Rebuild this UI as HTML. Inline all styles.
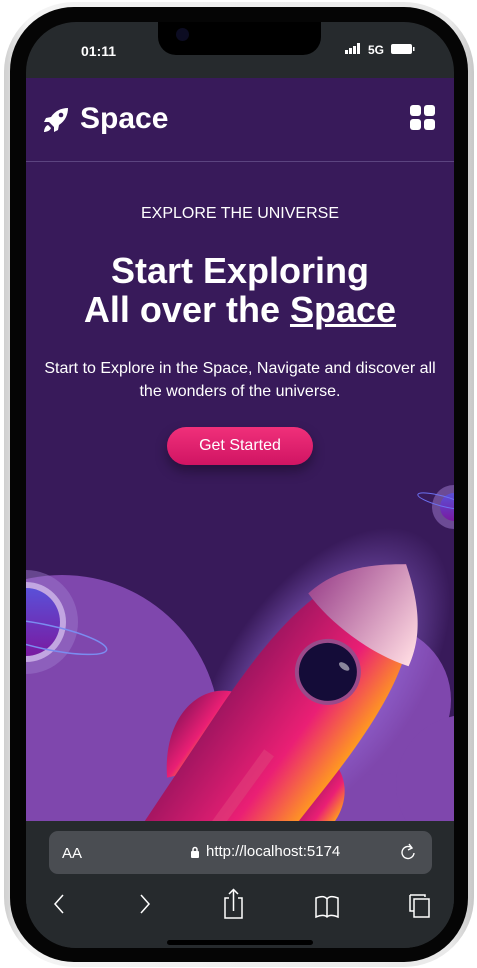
<!DOCTYPE html>
<html><head><meta charset="utf-8"><style>
*{margin:0;padding:0;box-sizing:border-box}
body{width:477px;height:968px;background:#fff;position:relative;overflow:hidden;font-family:"Liberation Sans",sans-serif}
.frame{position:absolute;left:4px;top:2px;width:470px;height:965px;border-radius:70px;background:linear-gradient(90deg,#cfcfcf,#f4f4f4 5%,#e9e9e9 95%,#c8c8c8);}
.bezel{position:absolute;left:10px;top:7px;width:458px;height:955px;border-radius:64px;background:#050505}
.screen{position:absolute;left:26px;top:22px;width:428px;height:926px;border-radius:50px;overflow:hidden;background:#262a2d}
.notch{position:absolute;left:158px;top:22px;width:163px;height:33px;background:#000;border-radius:0 0 18px 18px}
.time{position:absolute;left:81px;top:43px;color:#fff;font-weight:bold;font-size:14px}
.content{position:absolute;left:0;top:56px;width:428px;height:743px;background:#381a5a;overflow:hidden}
.hdr{height:84px;border-bottom:1px solid #5c4480;position:relative}
.hdr .t{position:absolute;left:54px;top:24px;color:#fff;font-weight:bold;font-size:30px}
.c{position:absolute;width:100%;text-align:center;color:#fff}
.btn{position:absolute;left:141px;top:349px;width:146px;height:38px;border-radius:19px;background:linear-gradient(#f0307a,#d01463);color:#fff;font-size:16px;text-align:center;line-height:38px;box-shadow:0 6px 12px rgba(0,0,0,.35)}
.bar{position:absolute;left:0;top:799px;width:428px;height:127px;background:#262a2d}
.url{position:absolute;left:23px;top:10px;width:383px;height:43px;border-radius:9px;background:#4a4d52;color:#fff}
</style></head><body>
<div class="frame"></div><div class="bezel"></div>
<div class="screen">
 <div class="content">
  <div class="hdr">
   <svg style="position:absolute;left:17px;top:29px" width="26" height="26" viewBox="0 0 26 26"><path d="M25 1C18 1 12 4 8 10L3 11 1 15 6 15 11 20 11 25 15 23 16 18C22 14 25 8 25 1Z" fill="#fff"/><circle cx="18" cy="8" r="2.3" fill="#381a5a"/><path d="M5 18C2 19 1 23 1 25 3 25 7 24 8 21Z" fill="#fff"/></svg>
   <div class="t">Space</div>
   <svg style="position:absolute;left:384px;top:27px" width="25" height="25"><rect x="0" y="0" width="11" height="11" rx="3" fill="#fff"/><rect x="14" y="0" width="11" height="11" rx="3" fill="#fff"/><rect x="0" y="14" width="11" height="11" rx="3" fill="#fff"/><rect x="14" y="14" width="11" height="11" rx="3" fill="#fff"/></svg>
  </div>
  <div class="c" style="top:127px;font-size:16px">EXPLORE THE UNIVERSE</div>
  <div class="c" style="top:173px;font-size:36px;font-weight:bold;line-height:39px">Start Exploring<br>All over the <u>Space</u></div>
  <div class="c" style="top:279px;font-size:16px;line-height:23px">Start to Explore in the Space, Navigate and discover all<br>the wonders of the universe.</div>
  <div class="btn">Get Started</div>
  <svg style="position:absolute;left:0;top:387px" width="428" height="356" viewBox="0 0 428 356">
   <defs>
    <linearGradient id="rb" x1="0" y1="0" x2="1" y2="0"><stop offset="0" stop-color="#a01560"/><stop offset=".6" stop-color="#ea1f74"/><stop offset="1" stop-color="#ff9a20"/></linearGradient>
    <linearGradient id="nose" x1="0" y1="0" x2="1" y2="0"><stop offset="0" stop-color="#a04a90"/><stop offset="1" stop-color="#ffdbe2"/></linearGradient>
    <radialGradient id="gl" cx=".5" cy=".5" r=".5"><stop offset=".6" stop-color="#9a70e0" stop-opacity=".5"/><stop offset="1" stop-color="#9a70e0" stop-opacity="0"/></radialGradient>
    <linearGradient id="pl" x1="0" y1="0" x2="0" y2="1"><stop offset="0" stop-color="#5a50d8"/><stop offset="1" stop-color="#7a1aa0"/></linearGradient>
   </defs>
   <circle cx="36" cy="268" r="158" fill="#7f47ad"/>
   <rect x="0" y="300" width="428" height="60" fill="#7f47ad"/>
   <circle cx="350" cy="235" r="75" fill="#7f47ad"/>
   <circle cx="440" cy="320" r="70" fill="#7f47ad"/>
   <circle cx="0" cy="157" r="52" fill="#a07ccf" opacity=".45"/>
   <circle cx="0" cy="157" r="40" fill="#d0b8ea" opacity=".8"/>
   <circle cx="0" cy="157" r="34" fill="url(#pl)"/>
   <ellipse cx="20" cy="172" rx="62" ry="12" transform="rotate(12 20 172)" fill="none" stroke="#7b8cf0" stroke-width="1.5"/>
   <circle cx="428" cy="42" r="22" fill="#a07ccf" opacity=".5"/>
   <circle cx="428" cy="42" r="14" fill="url(#pl)"/>
   <ellipse cx="416" cy="36" rx="25" ry="5" transform="rotate(15 416 36)" fill="none" stroke="#6c70f0" stroke-width="1"/>
   <g transform="translate(296,215) rotate(36)">
    <ellipse cx="0" cy="0" rx="95" ry="175" fill="url(#gl)"/>
    <path d="M-68 170C-110 120-95 70-60 60L-50 150Z" fill="url(#rb)"/>
    <path d="M68 170C110 120 95 70 60 60L50 150Z" fill="url(#rb)"/>
    <path d="M0 -143C55 -100 70 -40 66 80L60 230-60 230-66 80C-70 -40-55-100 0-143Z" fill="url(#rb)"/>
    <path d="M0 -143C40 -115 56 -90 62 -62C25 -50 -25 -50 -62 -62C-56 -90-40-115 0-143Z" fill="url(#nose)"/>
    <circle cx="0" cy="-10" r="33" fill="#9a4a8a"/>
    <circle cx="0" cy="-10" r="29" fill="#140c38"/>
    <ellipse cx="10" cy="-24" rx="6" ry="3" fill="#fff" opacity=".5"/>
    <rect x="-6" y="90" width="12" height="100" fill="#e0407a" opacity=".6"/>
   </g>
  </svg>
 </div>
 <div class="bar">
  <div class="url">
   <span style="position:absolute;left:13px;top:14px;font-size:15px">AA</span>
   <svg style="position:absolute;left:141px;top:15px" width="10" height="12"><rect x="1" y="5" width="8" height="7" rx="1" fill="#fff"/><path d="M3 5V3.5a2 2 0 0 1 4 0V5" stroke="#fff" stroke-width="1.5" fill="none"/></svg>
   <span style="position:absolute;left:157px;top:12px;font-size:15px">http://localhost:5174</span>
   <svg style="position:absolute;left:350px;top:11px" width="18" height="20"><path d="M13 6A6 6 0 1 0 15 11" stroke="#fff" stroke-width="1.4" fill="none"/><path d="M10 2L13 6 9 8" stroke="#fff" stroke-width="1.4" fill="none"/></svg>
  </div>
  <svg style="position:absolute;left:0;top:65px" width="428" height="35" fill="none" stroke="#fff" stroke-width="1.5">
   <path d="M37 9L29 18 37 27"/><path d="M115 9L123 18 115 27"/>
   <path d="M203 12H199V32H216V12H212M207.5 25V4M203 8L207.5 3.5 212 8"/>
   <path d="M290 12C295 10 299 10 301 13 303 10 307 10 312 12V31C307 29 303 29 301 31 299 29 295 29 290 31ZM301 13V31"/>
   <path d="M384 9H399V11M388 13H403V31H388Z"/><path d="M384 9V25H388"/>
  </svg>
  <div style="position:absolute;left:141px;top:119px;width:146px;height:5px;border-radius:3px;background:#000"></div>
 </div>
</div>
<div class="notch"></div>
<div style="position:absolute;left:176px;top:28px;width:13px;height:13px;border-radius:50%;background:#0c0c22"></div>
<div class="time">01:11</div>
<svg style="position:absolute;left:345px;top:43px" width="78" height="12"><rect x="0" y="7" width="3" height="4" fill="#fff"/><rect x="4" y="5" width="3" height="6" fill="#fff"/><rect x="8" y="3" width="3" height="8" fill="#fff"/><rect x="12" y="0" width="3" height="11" fill="#fff"/><text x="23" y="11" fill="#fff" font-family="Liberation Sans" font-weight="bold" font-size="12">5G</text><rect x="46" y="1" width="21" height="10" rx="2" fill="#fff"/><rect x="68" y="4" width="1.5" height="4" fill="#fff"/></svg>
</body></html>
